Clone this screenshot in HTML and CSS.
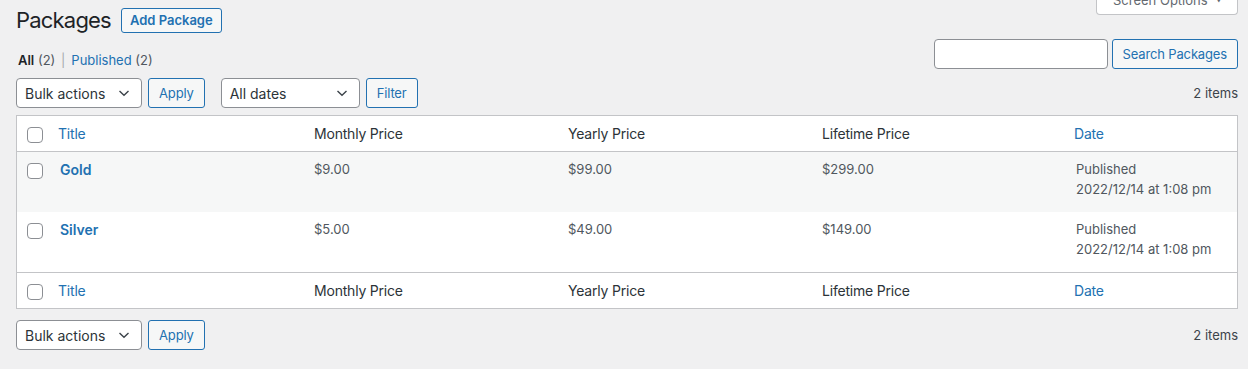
FILE: index.html
```html
<!DOCTYPE html>
<html lang="en">
<head>
  <meta charset="UTF-8">
  <meta name="viewport" content="width=device-width, initial-scale=1.0">
  <title>Packages</title>
  <link rel="stylesheet" href="styles.css">
</head>
<body>
  <div class="wrap">
    <!-- Page heading -->
    <div class="page-head">
      <h1>Packages</h1>
      <a href="#" class="page-title-action">Add Package</a>
      <button class="screen-options">Screen Options <span class="caret">&#9660;</span></button>
    </div>

    <!-- Views + search -->
    <div class="filter-row">
      <ul class="subsubsub">
        <li><b>All</b> <span class="count">(2)</span> <span class="sep">|</span></li>
        <li><a href="#">Published</a> <span class="count">(2)</span></li>
      </ul>
      <div class="search-box">
        <input type="search" class="search-input">
        <button class="button">Search Packages</button>
      </div>
    </div>

    <!-- Top table nav -->
    <div class="tablenav top">
      <div class="actions">
        <div class="select bulk">
          <span>Bulk actions</span>
          <svg width="12" height="8" viewBox="0 0 12 8"><path d="M1.5 2 L6 6.2 L10.5 2" fill="none" stroke="#3c434a" stroke-width="1.4"/></svg>
        </div>
        <button class="button">Apply</button>
      </div>
      <div class="actions dates">
        <div class="select date-select">
          <span>All dates</span>
          <svg width="12" height="8" viewBox="0 0 12 8"><path d="M1.5 2 L6 6.2 L10.5 2" fill="none" stroke="#3c434a" stroke-width="1.4"/></svg>
        </div>
        <button class="button">Filter</button>
      </div>
      <div class="displaying-num">2 items</div>
    </div>

    <!-- List table -->
    <table class="list-table">
      <colgroup>
        <col class="col-cb">
        <col class="col-wide">
        <col class="col-wide">
        <col class="col-wide">
        <col class="col-wide">
        <col>
      </colgroup>
      <thead>
        <tr>
          <th class="check-column"><input type="checkbox" class="cb"></th>
          <th class="sortable"><a href="#">Title</a></th>
          <th>Monthly Price</th>
          <th>Yearly Price</th>
          <th>Lifetime Price</th>
          <th class="sortable"><a href="#">Date</a></th>
        </tr>
      </thead>
      <tbody>
        <tr class="alt">
          <td class="check-column"><input type="checkbox" class="cb"></td>
          <td><a href="#" class="row-title">Gold</a></td>
          <td>$9.00</td>
          <td>$99.00</td>
          <td>$299.00</td>
          <td class="date">Published<br>2022/12/14 at 1:08 pm</td>
        </tr>
        <tr>
          <td class="check-column"><input type="checkbox" class="cb"></td>
          <td><a href="#" class="row-title">Silver</a></td>
          <td>$5.00</td>
          <td>$49.00</td>
          <td>$149.00</td>
          <td class="date">Published<br>2022/12/14 at 1:08 pm</td>
        </tr>
      </tbody>
      <tfoot>
        <tr>
          <th class="check-column"><input type="checkbox" class="cb"></th>
          <th class="sortable"><a href="#">Title</a></th>
          <th>Monthly Price</th>
          <th>Yearly Price</th>
          <th>Lifetime Price</th>
          <th class="sortable"><a href="#">Date</a></th>
        </tr>
      </tfoot>
    </table>

    <!-- Bottom table nav -->
    <div class="tablenav bottom">
      <div class="actions">
        <div class="select bulk">
          <span>Bulk actions</span>
          <svg width="12" height="8" viewBox="0 0 12 8"><path d="M1.5 2 L6 6.2 L10.5 2" fill="none" stroke="#3c434a" stroke-width="1.4"/></svg>
        </div>
        <button class="button">Apply</button>
      </div>
      <div class="displaying-num">2 items</div>
    </div>
  </div>
</body>
</html>
```

FILE: styles.css
```css
body {
  margin: 0;
  background: #f0f0f1;
  font-family: Inter, "Liberation Sans", sans-serif;
  font-size: 13px;
  color: #3c434a;
}
a {
  color: #2271b1;
  text-decoration: none;
}
.wrap {
  margin: 0 10px 0 16px;
}

/* heading */
.page-head {
  display: flex;
  align-items: center;
  padding-top: 7px;
}
.page-head h1 {
  margin: 0;
  font-size: 22px;
  font-weight: 400;
  line-height: 26px;
  letter-spacing: -0.8px;
  color: #1d2327;
}
.page-title-action {
  margin-left: 10px;
  height: 25px;
  padding: 0 8px;
  box-sizing: border-box;
  border: 1px solid #2271b1;
  border-radius: 3px;
  background: #f6f7f7;
  font-weight: 600;
  line-height: 23px;
}
.screen-options {
  margin-left: auto;
  align-self: flex-start;
  margin-top: -22px;
  width: 142px;
  height: 30px;
  padding: 0 0 0 16px;
  text-align: left;
  background: #fff;
  border: 1px solid #c3c4c7;
  border-top: none;
  border-radius: 0 0 4px 4px;
  font-family: inherit;
  font-size: 13px;
  color: #646970;
}
.screen-options .caret {
  font-size: 7px;
  margin-left: 4px;
  vertical-align: 2px;
}

/* views + search */
.filter-row {
  display: flex;
  justify-content: space-between;
  align-items: flex-start;
  margin-top: 6px;
}
.subsubsub {
  display: flex;
  gap: 4px;
  margin: 12px 0 0 2px;
  padding: 0;
  list-style: none;
  line-height: 18px;
  color: #50575e;
}
.subsubsub b {
  color: #1d2327;
  font-weight: 600;
}
.subsubsub .sep {
  color: #a7aaad;
  margin: 0 2px;
}
.search-box {
  display: flex;
  gap: 4px;
}
.search-input {
  width: 174px;
  height: 30px;
  box-sizing: border-box;
  border: 1px solid #8c8f94;
  border-radius: 4px;
  background: #fff;
}
.button {
  height: 30px;
  padding: 0 10px;
  box-sizing: border-box;
  border: 1px solid #2271b1;
  border-radius: 3px;
  background: #f6f7f7;
  color: #2271b1;
  font-family: inherit;
  font-size: 13px;
  letter-spacing: -0.15px;
}

/* table nav */
.tablenav {
  display: flex;
  align-items: center;
  height: 30px;
}
.tablenav.top {
  margin-top: 9px;
}
.tablenav.bottom {
  margin-top: 11px;
}
.actions {
  display: flex;
  gap: 6px;
}
.actions.dates {
  margin-left: 16px;
}
.select {
  display: flex;
  align-items: center;
  justify-content: space-between;
  height: 30px;
  box-sizing: border-box;
  padding: 0 11px 0 8px;
  border: 1px solid #8c8f94;
  border-radius: 4px;
  background: #fff;
  color: #2c3338;
  font-size: 14px;
}
.select.bulk {
  width: 126px;
}
.select.date-select {
  width: 139px;
}
.displaying-num {
  margin-left: auto;
  color: #3c434a;
}

/* list table */
.list-table {
  width: 100%;
  margin-top: 7px;
  table-layout: fixed;
  border-collapse: separate;
  border-spacing: 0;
  border: 1px solid #c3c4c7;
  background: #fff;
}
.col-cb {
  width: 33px;
}
.col-wide {
  width: 254px;
}
.list-table th {
  padding: 8px 10px;
  line-height: 19px;
  font-size: 14px;
  font-weight: 400;
  letter-spacing: -0.2px;
  text-align: left;
  color: #2c3338;
}
.list-table th.sortable {
  padding: 8px;
}
.list-table thead th {
  border-bottom: 1px solid #c3c4c7;
}
.list-table tfoot th {
  border-top: 1px solid #c3c4c7;
}
.list-table td {
  padding: 8px 10px 13px;
  line-height: 19.5px;
  vertical-align: top;
  color: #50575e;
}
.list-table tr.alt td {
  background: #f6f7f7;
}
.list-table .check-column {
  padding: 11px 0 0 10px;
  vertical-align: top;
}
.row-title {
  font-size: 14px;
  font-weight: 600;
}
.cb {
  appearance: none;
  display: block;
  margin: 0;
  width: 16px;
  height: 16px;
  border: 1px solid #8c8f94;
  border-radius: 4px;
  background: #fff;
}
```
